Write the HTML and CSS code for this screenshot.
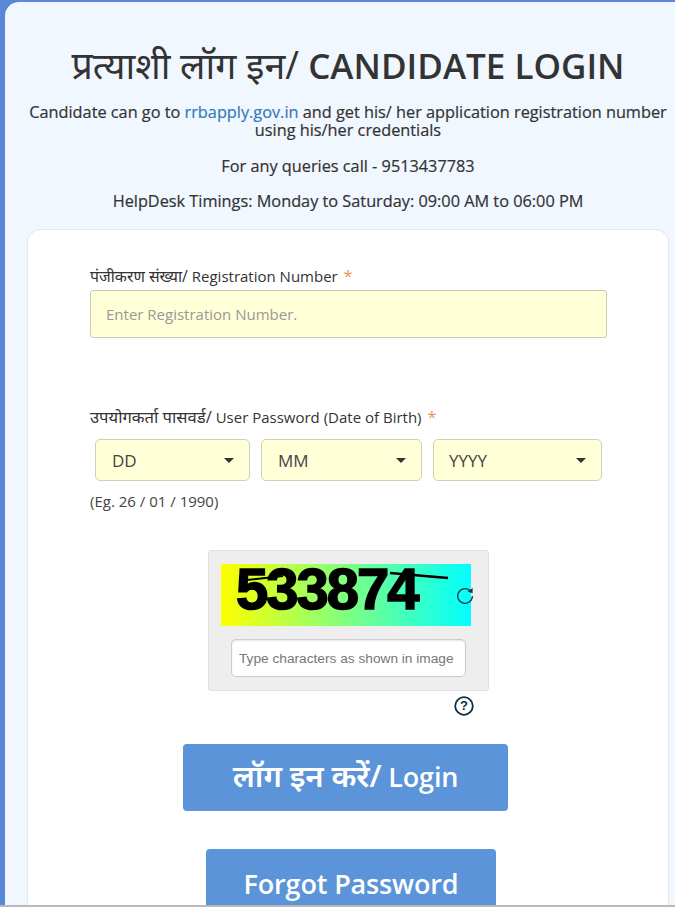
FILE: index.html
```html
<!DOCTYPE html>
<html lang="hi">
<head>
<meta charset="utf-8">
<title>Candidate Login</title>
<link rel="stylesheet" href="styles.css">
</head>
<body>
<main class="panel">
  <h1 class="title"><span class="title-hi">प्रत्याशी लॉग इन/</span> <span class="title-en">CANDIDATE LOGIN</span></h1>
  <p class="intro">Candidate can go to <a class="link" href="#">rrbapply.gov.in</a> and get his/ her application registration number using his/her credentials</p>
  <p class="info info-call">For any queries call - 9513437783</p>
  <p class="info info-time">HelpDesk Timings: Monday to Saturday: 09:00 AM to 06:00 PM</p>
  <section class="card">
    <label class="label" for="reg"><span class="label-hi-reg">पंजीकरण संख्या/</span> Registration Number <span class="req">*</span></label>
    <input class="reg-input" id="reg" type="text" placeholder="Enter Registration Number.">
    <div class="label label-pass"><span class="label-hi-pass">उपयोगकर्ता पासवर्ड/</span> User Password (Date of Birth) <span class="req">*</span></div>
    <div class="dob">
      <div class="select sel-dd"><span>DD</span><i class="caret"></i></div>
      <div class="select sel-mm"><span>MM</span><i class="caret"></i></div>
      <div class="select sel-yy"><span>YYYY</span><i class="caret"></i></div>
    </div>
    <div class="hint">(Eg. 26 / 01 / 1990)</div>
    <div class="captcha">
      <div class="captcha-img">
        <span class="captcha-text">533874</span>
        <svg class="captcha-lines" width="250" height="62" viewBox="0 0 250 62" aria-hidden="true">
          <path d="M26 16 L62 12" stroke="#000" stroke-width="2" fill="none"/>
          <path d="M169 9 L227 14" stroke="#000" stroke-width="2.6" fill="none"/>
        </svg>
        <svg class="refresh" width="18" height="18" viewBox="0 0 18 18" aria-hidden="true">
          <path d="M13.8 3.4 A7.4 7.4 0 1 0 16.4 9" stroke="#17333f" stroke-width="1.3" fill="none"/>
          <path d="M11.6 4.6 L16.6 1 L16.6 6.2 Z" fill="#17333f"/>
        </svg>
      </div>
      <input class="captcha-input" type="text" placeholder="Type characters as shown in image">
    </div>
    <div class="help-row">
      <svg class="help" width="20" height="20" viewBox="0 0 20 20" aria-hidden="true">
        <circle cx="10" cy="10" r="8.8" stroke="#0d2f3d" stroke-width="1.8" fill="#fff"/>
        <text x="10" y="14.2" text-anchor="middle" class="help-q">?</text>
      </svg>
    </div>
    <div class="actions">
      <button class="btn btn-login" type="button"><span class="btn-hi">लॉग इन करें/</span> Login</button>
      <button class="btn btn-forgot" type="button">Forgot Password</button>
    </div>
  </section>
</main>
<div class="bottom-line"></div>
</body>
</html>
```
FILE: styles.css
```css
* { box-sizing: border-box; }
html, body { margin: 0; height: 907px; overflow: hidden; }
body {
  background: #5b87d8;
  font-family: "Open Sans", "Noto Sans", sans-serif;
  color: #333;
  padding: 2px 0 0 5px;
  position: relative;
}
.panel {
  height: 905px;
  background: #f0f7ff;
  border-radius: 14px 0 0 0;
  padding: 40px 6px 0 22px;
  text-align: center;
  overflow: hidden;
}
.title {
  margin: 0 0 14px;
  font-size: 35px;
  line-height: 46px;
  font-weight: 400;
  color: #333;
}
.title-hi { font-size: 37.5px; }
.title-en { font-weight: 600; }
.intro {
  margin: 0 0 16px;
  font-size: 16.3px;
  line-height: 18px;
  font-weight: 500;
  color: #333;
  -webkit-text-stroke: 0.2px currentColor;
}
.link { color: #337ab7; text-decoration: none; }
.info {
  margin: 0;
  font-size: 16.3px;
  line-height: 22px;
  font-weight: 500;
  -webkit-text-stroke: 0.2px currentColor;
}
.info-call { margin-bottom: 13px; }
.info-time { margin-bottom: 17px; }
.card {
  background: #fff;
  border: 1px solid #e4e8ec;
  border-bottom: 0;
  border-radius: 14px 14px 0 0;
  padding: 35px 0 0 62px;
  text-align: left;
  height: 700px;
}
.label {
  display: block;
  font-size: 15px;
  line-height: 22px;
  color: #333;
  margin-bottom: 3px;
}
.label-hi-reg { font-size: 15.8px; }
.label-hi-pass { font-size: 16.6px; }
.req { color: #e8974f; font-size: 16px; margin-left: 2px; }
.reg-input {
  display: block;
  width: 517px;
  height: 48px;
  background: #ffffd8;
  border: 1px solid #c9cdb0;
  border-radius: 3px;
  padding: 0 15px;
  font: 400 15px "Open Sans", sans-serif;
  color: #333;
}
.reg-input::placeholder { color: #999; opacity: 1; }
.label-pass { margin-top: 68px; margin-bottom: 11px; }
.dob { display: flex; gap: 11px; padding-left: 5px; }
.select {
  height: 42px;
  background: #ffffd8;
  border: 1px solid #cfd0b8;
  border-radius: 5px;
  display: flex;
  align-items: center;
  justify-content: space-between;
  padding: 0 15px 0 16px;
  font-size: 17px;
  color: #444;
}
.sel-dd { width: 155px; }
.sel-mm { width: 161px; }
.sel-yy { width: 169px; }
.sel-yy span { margin-left: -1px; }
.caret {
  width: 0;
  height: 0;
  border-left: 5px solid transparent;
  border-right: 5px solid transparent;
  border-top: 5px solid #333;
}
.hint { margin-top: 9px; font-size: 15px; line-height: 22px; color: #444; }
.captcha {
  width: 281px;
  height: 141px;
  margin: 38px 0 0 118px;
  background: #eee;
  border: 1px solid #e0e0e0;
  border-radius: 3px;
  padding: 13px 0 0 12px;
}
.captcha-img {
  position: relative;
  width: 250px;
  height: 62px;
  background: linear-gradient(to right, #ffff00, #00ffff);
}
.captcha-text {
  position: absolute;
  left: 15px;
  top: -6px;
  font: 700 58px/62px "Liberation Sans", sans-serif;
  letter-spacing: -2px;
  color: #000;
  -webkit-text-stroke: 1.6px #000;
}
.captcha-lines { position: absolute; left: 0; top: 0; }
.refresh { position: absolute; left: 235px; top: 23px; }
.captcha-input {
  display: block;
  width: 235px;
  height: 38px;
  margin: 13px 0 0 10px;
  background: #fff;
  border: 1px solid #ccc;
  border-radius: 5px;
  padding: 0 7px;
  font: 400 13.7px "Liberation Sans", sans-serif;
  box-shadow: inset 0 1px 2px rgba(0,0,0,.1);
}
.captcha-input::placeholder { color: #777; opacity: 1; }
.help-row { width: 384px; margin-top: 5px; display: flex; justify-content: flex-end; height: 22px; }
.help-q { font: 700 13px "Liberation Sans", sans-serif; fill: #0d2f3d; }
.actions { display: flex; flex-direction: column; align-items: flex-start; }
.btn {
  border: 0;
  border-radius: 4px;
  background: #5b94d8;
  color: #fff;
  font-family: "Open Sans", "Noto Sans", sans-serif;
  font-size: 27px;
  font-weight: 600;
  letter-spacing: -0.15px;
}
.btn-hi { font-size: 31px; }
.btn-login { width: 325px; height: 67px; margin: 26px 0 0 93px; padding: 0 0 6px; }
.btn-forgot { width: 290px; height: 67px; margin: 38px 0 0 116px; padding: 2px 0 0; }
.bottom-line {
  position: absolute;
  left: 0;
  right: 0;
  bottom: 0;
  height: 2px;
  background: #b9b9b9;
}
```
